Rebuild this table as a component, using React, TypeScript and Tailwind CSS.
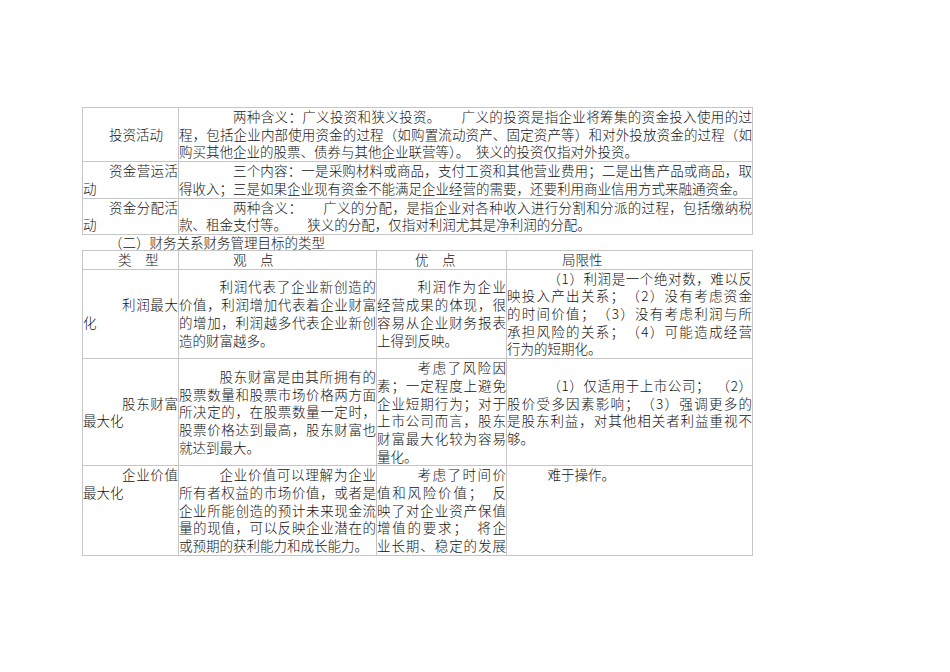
import clsx from "clsx"

type Cell = {
  lines: string[]
  indent: string
  fill?: boolean
}

const activities: { name: Cell; body: Cell }[] = [
  {
    name: { lines: ["投资活动"], indent: "indent-[26px]" },
    body: {
      indent: "indent-[4em]",
      lines: [
        "两种含义：广义投资和狭义投资。　　广义的投资是指企业将筹集的资金投入使用的过",
        "程，包括企业内部使用资金的过程（如购置流动资产、固定资产等）和对外投放资金的过程（如",
        "购买其他企业的股票、债券与其他企业联营等）。　狭义的投资仅指对外投资。",
      ],
    },
  },
  {
    name: { lines: ["资金营运活", "动"], indent: "indent-[26px]" },
    body: {
      indent: "indent-[4em]",
      lines: [
        "三个内容：一是采购材料或商品，支付工资和其他营业费用；二是出售产品或商品，取",
        "得收入；三是如果企业现有资金不能满足企业经营的需要，还要利用商业信用方式来融通资金。",
      ],
    },
  },
  {
    name: { lines: ["资金分配活", "动"], indent: "indent-[26px]" },
    body: {
      indent: "indent-[4em]",
      lines: [
        "两种含义：　　广义的分配，是指企业对各种收入进行分割和分派的过程，包括缴纳税",
        "款、租金支付等。　　狭义的分配，仅指对利润尤其是净利润的分配。",
      ],
    },
  },
]

const goals: { cells: Cell[]; top?: boolean }[] = [
  {
    cells: [
      { lines: ["利润最大", "化"], indent: "indent-[39px]" },
      {
        indent: "indent-[3em]",
        lines: ["利润代表了企业新创造的", "价值，利润增加代表着企业财富", "的增加，利润越多代表企业新创", "造的财富越多。"],
      },
      {
        indent: "indent-[3em]",
        lines: ["利润作为企业", "经营成果的体现，很", "容易从企业财务报表", "上得到反映。"],
      },
      {
        indent: "indent-[3em]",
        lines: [
          "（1）利润是一个绝对数，难以反",
          "映投入产出关系；　（2）没有考虑资金",
          "的时间价值；　（3）没有考虑利润与所",
          "承担风险的关系；　（4）可能造成经营",
          "行为的短期化。",
        ],
      },
    ],
  },
  {
    cells: [
      { lines: ["股东财富", "最大化"], indent: "indent-[39px]" },
      {
        indent: "indent-[3em]",
        lines: [
          "股东财富是由其所拥有的",
          "股票数量和股票市场价格两方面",
          "所决定的，在股票数量一定时，",
          "股票价格达到最高，股东财富也",
          "就达到最大。",
        ],
      },
      {
        indent: "indent-[3em]",
        lines: ["考虑了风险因", "素；一定程度上避免", "企业短期行为；对于", "上市公司而言，股东", "财富最大化较为容易", "量化。"],
      },
      {
        indent: "indent-[3em]",
        lines: [
          "（1）仅适用于上市公司；  （2）",
          "股价受多因素影响；　（3）强调更多的",
          "是股东利益，对其他相关者利益重视不",
          "够。",
        ],
      },
    ],
  },
  {
    top: true,
    cells: [
      { lines: ["企业价值", "最大化"], indent: "indent-[39px]" },
      {
        indent: "indent-[3em]",
        lines: [
          "企业价值可以理解为企业",
          "所有者权益的市场价值，或者是",
          "企业所能创造的预计未来现金流",
          "量的现值，可以反映企业潜在的",
          "或预期的获利能力和成长能力。",
        ],
      },
      {
        indent: "indent-[3em]",
        fill: true,
        lines: ["考虑了时间价", "值和风险价值；　反", "映了对企业资产保值", "增值的要求；　将企", "业长期、稳定的发展"],
      },
      { lines: ["难于操作。"], indent: "indent-[3em]" },
    ],
  },
]

function Para({ lines, indent, fill = false }: Cell) {
  return (
    <>
      {lines.map((line, i) => (
        <div
          key={i}
          className={clsx(
            "whitespace-pre",
            i === 0 && indent,
            (fill || i < lines.length - 1) && "text-justify [text-align-last:justify]",
          )}
        >
          {line}
        </div>
      ))}
    </>
  )
}

const td = "border border-[#c6c6c6] p-0"

export default function App() {
  return (
    <div
      className="min-h-[672px] bg-white pt-[107px] pl-[82px] text-[13.5px] leading-[17.7px] font-light text-[#111]"
      style={{ fontFamily: '"Noto Sans CJK SC", "Noto Sans", sans-serif' }}
    >
      <table className="w-[670px] table-fixed border-collapse">
        <colgroup>
          <col className="w-[96px]" />
          <col className="w-[574px]" />
        </colgroup>
        <tbody>
          {activities.map((row, i) => (
            <tr key={i}>
              <td className={clsx(td, "align-middle")}>
                <Para {...row.name} />
              </td>
              <td className={clsx(td, "align-middle")}>
                <Para {...row.body} />
              </td>
            </tr>
          ))}
        </tbody>
      </table>

      <p className="indent-[2em] leading-[15px]">（二）财务关系财务管理目标的类型</p>

      <table className="w-[670px] table-fixed border-collapse">
        <colgroup>
          <col className="w-[96px]" />
          <col className="w-[198px]" />
          <col className="w-[130px]" />
          <col className="w-[246px]" />
        </colgroup>
        <tbody>
          <tr>
            <td className={clsx(td, "indent-[35px]")}>类　型</td>
            <td className={clsx(td, "indent-[54px]")}>观　点</td>
            <td className={clsx(td, "indent-[38px]")}>优　点</td>
            <td className={clsx(td, "indent-[55px]")}>局限性</td>
          </tr>
          {goals.map((row, i) => (
            <tr key={i}>
              {row.cells.map((cell, j) => (
                <td key={j} className={clsx(td, row.top ? "align-top" : "align-middle")}>
                  <Para {...cell} />
                </td>
              ))}
            </tr>
          ))}
        </tbody>
      </table>
    </div>
  )
}
